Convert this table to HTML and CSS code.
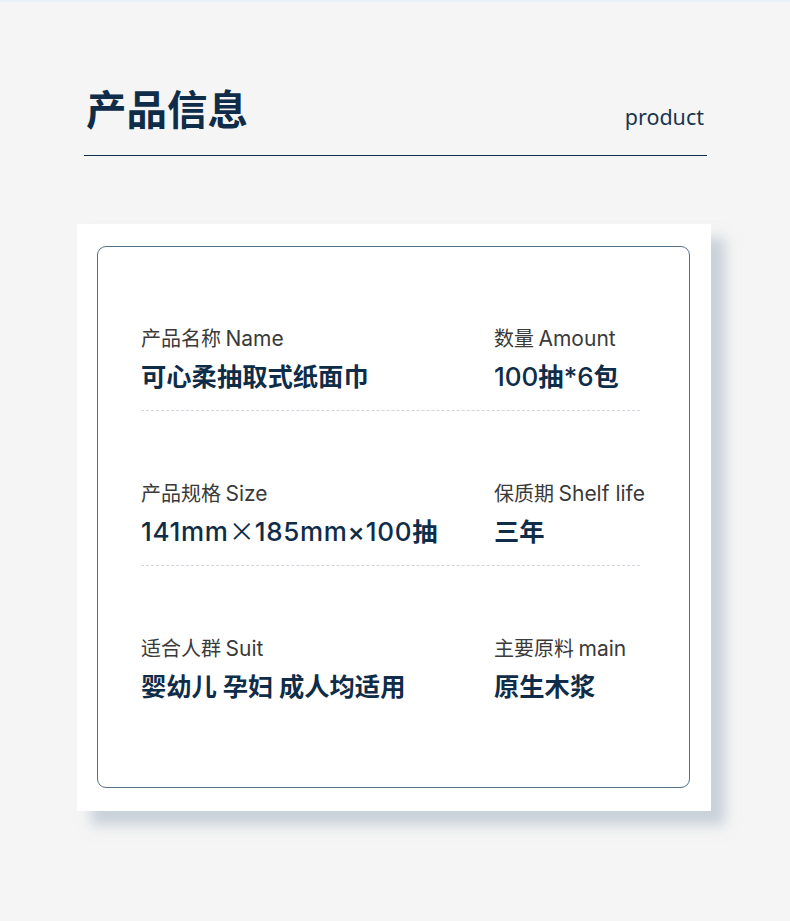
FILE: index.html
```html
<!DOCTYPE html>
<html lang="zh-CN">
<head>
<meta charset="utf-8">
<title>产品信息</title>
<link rel="stylesheet" href="styles.css">
</head>
<body>
<div class="page">
  <header class="header">
    <h1 class="title">产品信息</h1>
    <span class="subtitle">product</span>
  </header>

  <section class="card">
    <div class="box">
      <div class="row">
        <div class="cell">
          <div class="label">产品名称 <span class="en">Name</span></div>
          <div class="value">可心柔抽取式纸面巾</div>
        </div>
        <div class="cell">
          <div class="label">数量 <span class="en">Amount</span></div>
          <div class="value"><span class="num">100</span>抽<span class="num">*6</span>包</div>
        </div>
      </div>
      <div class="row">
        <div class="cell">
          <div class="label">产品规格 <span class="en">Size</span></div>
          <div class="value"><span class="num spaced">141mm</span><span class="wide">×</span><span class="num spaced">185mm×100</span>抽</div>
        </div>
        <div class="cell">
          <div class="label">保质期 <span class="en">Shelf life</span></div>
          <div class="value">三年</div>
        </div>
      </div>
      <div class="row row-last">
        <div class="cell">
          <div class="label">适合人群 <span class="en">Suit</span></div>
          <div class="value">婴幼儿 孕妇 成人均适用</div>
        </div>
        <div class="cell">
          <div class="label">主要原料 <span class="en">main</span></div>
          <div class="value">原生木浆</div>
        </div>
      </div>
    </div>
  </section>
</div>
</body>
</html>
```

FILE: styles.css
```css
html, body {
  margin: 0;
  padding: 0;
}

body {
  background: #f5f5f5;
  border-top: 2px solid #e9f0f7;
  font-family: Inter, "Noto Sans CJK SC", sans-serif;
  color: #0f2c48;
  min-height: 919px;
}

.page {
  display: flex;
  flex-direction: column;
}

.header {
  margin-left: 84px;
  width: 623px;
  padding-top: 82px;
  padding-bottom: 23px;
  border-bottom: 1px solid #132f4c;
  display: flex;
  justify-content: space-between;
  align-items: flex-end;
}

.title {
  margin: 0;
  padding-left: 2px;
  font-family: "Noto Sans CJK SC", sans-serif;
  font-size: 40.5px;
  line-height: 48px;
  font-weight: 700;
  color: #0f2c48;
}

.subtitle {
  font-family: "Noto Sans", sans-serif;
  font-size: 21.5px;
  line-height: 28px;
  color: #1a3550;
  padding-right: 3px;
  padding-bottom: 1px;
}

.card {
  margin-top: 68px;
  margin-left: 77px;
  width: 634px;
  box-sizing: border-box;
  background: #ffffff;
  padding: 22px 21px 23px 20px;
  box-shadow: 14px 14px 12px rgba(176, 189, 203, 0.65);
}

.box {
  border: 1px solid #56708a;
  border-radius: 9px;
  padding: 77px 0 85px 43px;
}

.row {
  width: 499px;
  display: grid;
  grid-template-columns: 353px 1fr;
  padding-top: 68px;
  padding-bottom: 18px;
  border-bottom: 1px dashed #cfd6dd;
}

.row:first-child {
  padding-top: 0;
}

.row-last {
  border-bottom: none;
  padding-bottom: 0;
}

.cell {
  display: flex;
  flex-direction: column;
  gap: 6px;
}

.label {
  height: 28px;
  font-family: "Noto Sans CJK SC", sans-serif;
  font-size: 20px;
  line-height: 28px;
  color: #3a3a3a;
  white-space: nowrap;
}

.en {
  font-family: Inter, sans-serif;
  font-size: 21px;
  line-height: 20px;
}

.value {
  height: 34px;
  font-family: "Noto Sans CJK SC", sans-serif;
  font-size: 25.3px;
  line-height: 34px;
  font-weight: 700;
  color: #0f2c48;
  white-space: nowrap;
}

.num {
  font-family: Inter, sans-serif;
  font-size: 26px;
  line-height: 26px;
  font-weight: 500;
}

.spaced {
  letter-spacing: 0.7px;
}

.wide {
  font-family: "Noto Sans CJK SC", sans-serif;
  font-weight: 400;
  font-size: 26px;
  line-height: 26px;
}
```
